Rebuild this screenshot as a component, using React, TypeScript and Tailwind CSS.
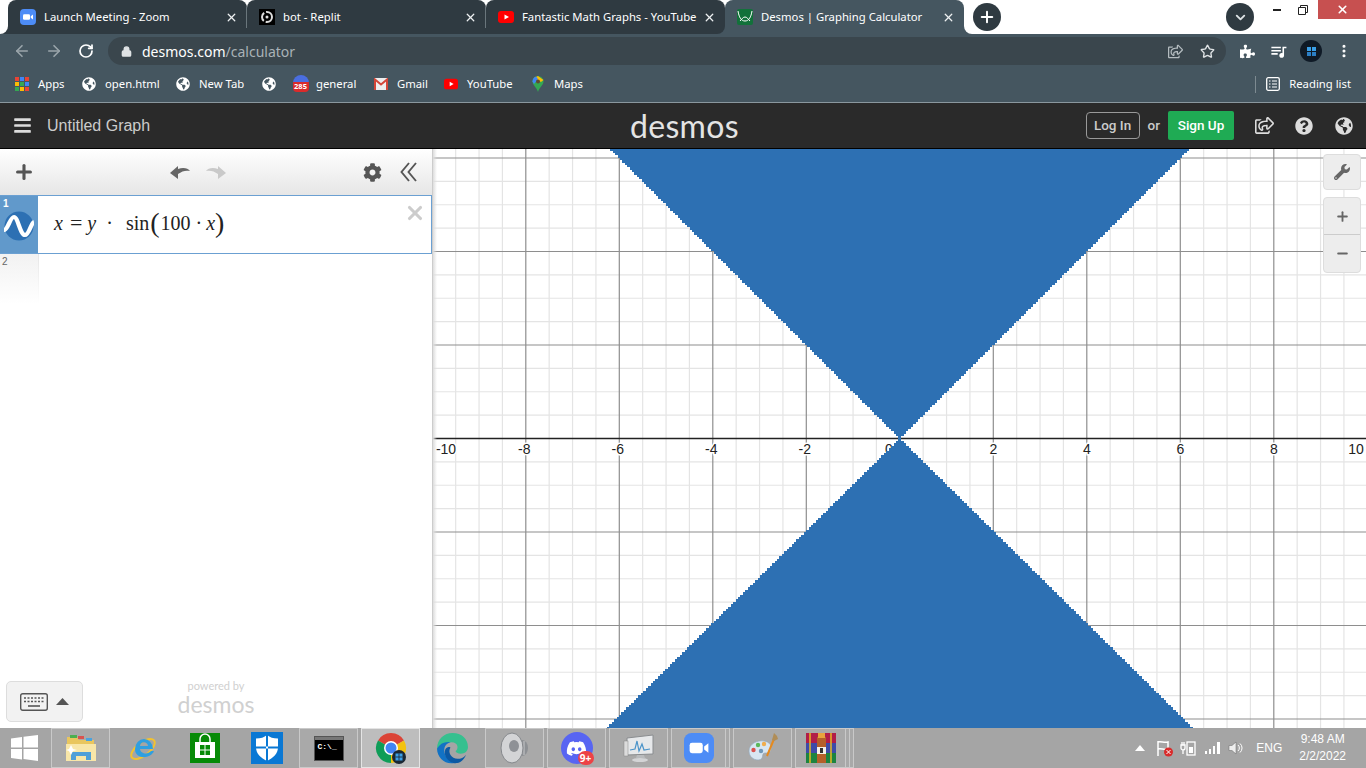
import type { ReactNode } from "react";
import { ArrowLeft, ArrowRight, ChevronDown, Lock, Minus, MoreVertical, Plus, RotateCw, Star, X } from "lucide-react";
import { FaBars, FaCog, FaDiscord, FaGlobeAmericas, FaPuzzlePiece, FaQuestionCircle, FaRegShareSquare, FaWrench } from "react-icons/fa";
import { MdQueueMusic } from "react-icons/md";

const UNIT = 46.75;
const CX = 466.8;
const CY = 289.5;
const W = 933;
const H = 579;

const range = (from: number, to: number) => Array.from({ length: to - from + 1 }, (_, i) => from + i);

// the plotted region has a jagged edge, so build it out of little steps
function stairs(dir: number) {
  const step = 2.4;
  const k = dir > 0 ? 1.012 : 1; // lower half opens a touch wider
  let left = `M${CX} ${CY}`;
  let right = "";
  for (let i = 1; i <= 125; i++) {
    const d = i * step;
    const x = d * k - 1;
    left += `L${CX - x} ${CY + dir * (d - step)}L${CX - x} ${CY + dir * d}`;
    right = `L${CX + x} ${CY + dir * d}L${CX + x} ${CY + dir * (d - step)}` + right;
  }
  return left + right + "Z";
}

function Graph() {
  const xs = range(-21, 21).map((i) => ({ p: CX + (i * UNIT) / 2, major: i % 4 === 0 }));
  const ys = range(-13, 13).map((i) => ({ p: CY + (i * UNIT) / 2, major: i % 4 === 0 }));
  const labels = [-10, -8, -6, -4, -2, 2, 4, 6, 8, 10];
  return (
    <svg width={W} height={H} viewBox={`0 0 ${W} ${H}`} className="block">
      {xs.filter((l) => !l.major).map((l) => <line key={l.p} x1={l.p} x2={l.p} y1={0} y2={H} stroke="#e4e4e4" strokeWidth={1.2} />)}
      {ys.filter((l) => !l.major).map((l) => <line key={l.p} x1={0} x2={W} y1={l.p} y2={l.p} stroke="#e4e4e4" strokeWidth={1.2} />)}
      {xs.filter((l) => l.major).map((l) => <line key={l.p} x1={l.p} x2={l.p} y1={0} y2={H} stroke="#8e8e8e" strokeWidth={1.2} />)}
      {ys.filter((l) => l.major && l.p !== CY).map((l) => <line key={l.p} x1={0} x2={W} y1={l.p} y2={l.p} stroke="#8e8e8e" strokeWidth={1.2} />)}
      <line x1={0} x2={W} y1={CY} y2={CY} stroke="#222" strokeWidth={1.6} />
      <text x={CX - 11} y={305} textAnchor="middle" fontFamily="'Liberation Sans',sans-serif" fontSize={14} fill="#222">0</text>
      <path d={stairs(-1)} fill="#2d70b3" shapeRendering="crispEdges" />
      <path d={stairs(1)} fill="#2d70b3" shapeRendering="crispEdges" />
      {labels.map((n) => (
        <text
          key={n}
          x={n === -10 ? 13 : n === 10 ? 923 : CX + n * UNIT - (n < 0 ? 1.5 : 0)}
          y={305}
          textAnchor="middle"
          fontFamily="'Liberation Sans',sans-serif"
          fontSize={14}
          fill="#222"
          stroke="#fff"
          strokeWidth={3}
          paintOrder="stroke"
        >
          {n}
        </text>
      ))}
    </svg>
  );
}

function ZoomIcon({ size = 16 }: { size?: number }) {
  return (
    <svg width={size} height={size} viewBox="0 0 32 32">
      <rect width="32" height="32" rx="8" fill="#4d8cf6" />
      <rect x="6" y="10.5" width="14" height="11" rx="2.5" fill="#fff" />
      <path d="M21.5 14.5 26 11v10l-4.500-3.500z" fill="#fff" />
    </svg>
  );
}

function YoutubeIcon() {
  return (
    <svg width="16" height="12" viewBox="0 0 16 12">
      <rect width="16" height="12" rx="3" fill="#f00" />
      <path d="M6.500 3.500 11 6 6.500 8.500z" fill="#fff" />
    </svg>
  );
}

function Tab({ icon, title, active, last, sep }: { icon: ReactNode; title: string; active?: boolean; last?: boolean; sep?: boolean }) {
  return (
    <div className={`flex h-[34px] w-[239px] shrink-0 items-center rounded-t-lg pl-3 ${active ? "bg-[#455660]" : "bg-[#2f3a41]"} ${last ? "rounded-br-lg" : ""}`}>
      <div className="flex w-4 shrink-0 items-center justify-center">{icon}</div>
      <span className="ml-2 w-[181px] truncate text-[11.3px] text-white">{title}</span>
      <X size={13} strokeWidth={2.4} className="shrink-0 text-[#eef1f2]" />
      {sep && <div className="ml-auto h-[21px] w-px bg-[#6a767c]" />}
    </div>
  );
}

function Bookmark({ w, icon, label }: { w: string; icon: ReactNode; label?: string }) {
  return (
    <div className={`flex shrink-0 items-center ${w}`}>
      <div className="flex h-4 w-[14px] shrink-0 items-center justify-center">{icon}</div>
      {label && <span className="ml-[9px] text-[11.3px] text-white">{label}</span>}
    </div>
  );
}

const globe = <FaGlobeAmericas size={14} className="text-white" />;

function AppsIcon() {
  const colors = ["#ea4335", "#4285f4", "#ea4335", "#fbbc05", "#34a853", "#4285f4", "#34a853", "#fbbc05", "#ea4335"];
  return (
    <div className="grid grid-cols-3 gap-[1px]">
      {colors.map((c, i) => <svg key={i} width="4" height="4" className="block"><rect width="4" height="4" fill={c} /></svg>)}
    </div>
  );
}

function ChromeIcon() {
  return (
    <svg width="32" height="32" viewBox="0 0 32 32">
      <path d="M16 16 3 8.500A15 15 0 0 1 29 8.500z" fill="#db4437" />
      <path d="M16 16 29 8.500A15 15 0 0 1 16 31z" fill="#f4c20d" />
      <path d="M16 16 16 31A15 15 0 0 1 3 8.500z" fill="#0f9d58" />
      <circle cx="16" cy="16" r="7" fill="#fff" />
      <circle cx="16" cy="16" r="5.500" fill="#4285f4" />
      <circle cx="24" cy="25" r="7" fill="#1a2733" />
      <rect x="20.500" y="21.500" width="7" height="7" fill="#3aa0e8" />
      <path d="M24 21.500v7M20.500 25h7" stroke="#1a2733" strokeWidth=".8" />
    </svg>
  );
}

function TaskIcon({ name }: { name: string }) {
  switch (name) {
    case "folder":
      return (
        <svg width="32" height="30" viewBox="0 0 32 30">
          <path d="M2 4h10l2 3h15v20H2z" fill="#e9c65e" />
          <rect x="5" y="2" width="7" height="3" fill="#4caf50" />
          <rect x="13" y="3" width="6" height="3" fill="#d9534f" />
          <rect x="21" y="5" width="6" height="3" fill="#4aa3df" />
          <path d="M1 11h30v17H1z" fill="#f8e6a8" />
          <path d="M6 19h20v8h-5v-4H11v4H6z" fill="#4f9fd8" />
          <path d="M6 12l2 4 4 1-4 1-2 4-2-4-3-1 3-1z" fill="#fff" />
        </svg>
      );
    case "ie":
      return (
        <svg width="32" height="32" viewBox="0 0 32 32">
          <ellipse cx="16" cy="17" rx="14" ry="6.500" transform="rotate(-38 16 17)" fill="none" stroke="#f2c230" strokeWidth="2" />
          <path d="M8 17a9 10 0 1 1 18 0H13c.5 5 8 6 11 2h3c-3 8-19 9-19-2zm5-3h8c-.5-5-7.500-5-8 0z" fill="#2f9fe0" fillRule="evenodd" />
        </svg>
      );
    case "store":
      return (
        <svg width="30" height="30" viewBox="0 0 30 30">
          <rect width="30" height="30" fill="#078a07" />
          <path d="M5 9h20v16H5z" fill="#fff" />
          <path d="M10 9V6a5 5 0 0 1 10 0v3" fill="none" stroke="#fff" strokeWidth="1.500" />
          <path d="M10 12h4.500v4.500H10zm5.500 0H20v4.500h-4.500zM10 17.500h4.500V22H10zm5.500 0H20V22h-4.500z" fill="#078a07" />
        </svg>
      );
    case "shield":
      return (
        <svg width="32" height="32" viewBox="0 0 32 32">
          <rect width="32" height="32" fill="#0a78d4" />
          <path d="M16 3c3 2.500 6 3.500 11 3.500V15c0 7-5 11-11 14C10 26 5 22 5 15V6.500C10 6.500 13 5.500 16 3z" fill="#fff" />
          <path d="M15 3v26h2V3zM5 14.500h22v2H5z" fill="#0a78d4" />
        </svg>
      );
    case "cmd":
      return (
        <div className="flex h-[25px] w-[30px] flex-col border border-[#555] bg-black">
          <div className="h-[3px] bg-[#777]" />
          <span className="pl-[3px] pt-[3px] font-['Liberation_Mono',monospace] text-[8px] leading-[8px] font-bold text-white">C:\_</span>
        </div>
      );
    case "chrome":
      return <ChromeIcon />;
    case "edge":
      return (
        <svg width="33" height="33" viewBox="0 0 32 32">
          <path d="M1 16C1 7 8 1 16 1c9 0 15 6 15 13.500 0 4-3 6.500-7 6.500-3 0-5-1-5-2.500C22 17 22 10 15 10 9 10 5 13 1 16z" fill="#36c08f" />
          <path d="M1 16c3-5 8-7 13-6-4 1-6 4-6 8 0 5 4 10 10 12-9 2-17-5-17-14z" fill="#1272c4" />
          <path d="M14 15c-3 5 1 11 7 11 3 0 6-1 8-4-2 6-7 9-12 8-6-1-10-8-8-13 1-2 3-3 5-2z" fill="#0c59a4" />
        </svg>
      );
    case "speaker":
      return (
        <svg width="30" height="32" viewBox="0 0 30 32">
          <ellipse cx="22" cy="16" rx="6" ry="8" fill="#8d9094" />
          <path d="M21 8v16M24 9v14" stroke="#c8c9cb" />
          <ellipse cx="12" cy="16" rx="11" ry="15" fill="#d3d4d6" stroke="#85888c" />
          <ellipse cx="14" cy="14" rx="5" ry="6" fill="#8e9196" />
        </svg>
      );
    case "discord":
      return (
        <div className="relative flex size-8 items-center justify-center rounded-full bg-[#5865f2]">
          <FaDiscord size={21} className="text-white" />
          <span className="absolute -right-[1px] -bottom-[1px] flex h-[14px] w-[16px] items-center justify-center rounded-full bg-[#ed4245] text-[10px] leading-none font-bold text-white">9+</span>
        </div>
      );
    case "monitor":
      return (
        <svg width="32" height="30" viewBox="0 0 32 30">
          <path d="M4 5l26-3v19L4 22z" fill="#e6e8ea" stroke="#8a8d90" />
          <path d="M7 17l5-1 2-8 2 10 3-7 2 6 6-1" fill="none" stroke="#4a93c9" strokeWidth="1.200" />
          <path d="M14 22h7l1 3H13z" fill="#b9bbbd" />
          <ellipse cx="17" cy="27" rx="8" ry="2" fill="#d3d4d6" />
          <rect x="1" y="8" width="4" height="15" fill="#dcdcdc" stroke="#888" strokeWidth=".5" />
        </svg>
      );
    case "zoom":
      return <ZoomIcon size={30} />;
    case "paint":
      return (
        <svg width="32" height="32" viewBox="0 0 32 32">
          <path d="M2 19c0-7 8-11 15-10 6 1 8 5 7 9-1 3-4 3-6 3-3 0-2 3-3 5-2 4-13 2-13-7z" fill="#d8e6f2" stroke="#8fa8bd" strokeWidth=".6" />
          <circle cx="6.500" cy="18" r="2.200" fill="#d9534f" />
          <circle cx="11" cy="13" r="2.200" fill="#5cb85c" />
          <circle cx="17" cy="12" r="2.200" fill="#f0ad4e" />
          <circle cx="14" cy="19" r="2.200" fill="#6f97b8" />
          <path d="M20 24 27 7" stroke="#e58a1f" strokeWidth="2" />
          <path d="M25 8l2-7 3 3 1 3-4 2z" fill="#b08d57" />
        </svg>
      );
    default:
      return (
        <svg width="32" height="30" viewBox="0 0 32 30">
          <rect x="1" y="0" width="30" height="10" fill="#b21e48" />
          <rect x="1" y="10" width="30" height="10" fill="#3e4ba8" />
          <rect x="1" y="20" width="30" height="10" fill="#1c8440" />
          <path d="M5 0v30M26 0v30" stroke="#e8b923" strokeWidth="1.500" />
          <rect x="12" y="4" width="9" height="26" fill="#b5602a" />
          <rect x="13" y="0" width="7" height="5" fill="#e8a33d" />
          <rect x="12" y="14" width="9" height="7" fill="#f4f1e8" />
          <rect x="15" y="15" width="3" height="5" fill="#333" />
        </svg>
      );
  }
}

const taskItems = [
  { name: "folder", on: true },
  { name: "ie" },
  { name: "store" },
  { name: "shield" },
  { name: "cmd", on: true },
  { name: "chrome", on: true, strong: true },
  { name: "edge" },
  { name: "speaker", on: true },
  { name: "discord", on: true },
  { name: "monitor", on: true },
  { name: "zoom", on: true, stacked: 1 },
  { name: "paint", on: true },
  { name: "winrar", on: true, stacked: 2 },
];

function TaskButton({ name, on, strong, stacked = 0 }: { name: string; on?: boolean; strong?: boolean; stacked?: number }) {
  return (
    <div className={`flex h-10 w-[59px] shrink-0 ${on ? `border ${strong ? "border-[#e4e4e4] bg-[#bdbdbd]" : "border-[#c9c9c9] bg-[#a9a9a9]"}` : ""}`}>
      <div className="flex flex-1 items-center justify-center">
        <TaskIcon name={name} />
      </div>
      {stacked > 0 && <div className="w-[4px] border-l border-[#c9c9c9]" />}
      {stacked > 1 && <div className="w-[4px] border-l border-[#c9c9c9]" />}
    </div>
  );
}

export default function App() {
  return (
    <div className="flex h-screen w-[1366px] flex-col overflow-hidden bg-white font-['Noto_Sans',sans-serif]">
      {/* chrome tab strip */}
      <div className="flex h-[34px] shrink-0 bg-[linear-gradient(#fff_0_50%,#455660_50%)]">
        <div className="w-2 shrink-0 bg-[#2f3a41]">
          <div className="h-full rounded-br-lg bg-white" />
        </div>
        <Tab icon={<ZoomIcon />} title="Launch Meeting - Zoom" sep />
        <Tab
          icon={
            <svg width="16" height="16" viewBox="0 0 16 16">
              <rect width="16" height="16" fill="#000" />
              <circle cx="8" cy="8" r="5" fill="none" stroke="#ddd" strokeWidth="2" strokeDasharray="9 2" />
              <circle cx="8" cy="8" r="1.500" fill="#ddd" />
            </svg>
          }
          title="bot - Replit"
          sep
        />
        <Tab icon={<YoutubeIcon />} title="Fantastic Math Graphs - YouTube" last />
        <Tab
          icon={
            <svg width="16" height="16" viewBox="0 0 16 16">
              <rect width="16" height="16" rx="2" fill="#12713a" />
              <path d="M1 2c1 6 3 10 7 10s6-4 7-10M3 12c2-2 3-4 5-4s3 2 5 4" fill="none" stroke="#fff" strokeWidth="1" />
            </svg>
          }
          title="Desmos | Graphing Calculator"
          active
        />
        <div className="flex flex-1 items-center rounded-bl-lg bg-white">
          <div className="ml-[9px] flex size-7 items-center justify-center rounded-full bg-[#2f3a41]">
            <Plus size={18} strokeWidth={2.6} className="text-white" />
          </div>
          <div className="ml-[225px] flex size-7 items-center justify-center rounded-full bg-[#2f3a41]">
            <ChevronDown size={15} strokeWidth={3} className="text-[#dde2e5]" />
          </div>
          <div className="mb-[15px] ml-[10px] flex h-[19px] flex-1 items-start">
            <div className="flex h-[19px] w-[26px] items-center justify-center">
              <div className="h-[2px] w-[8px] bg-[#222]" />
            </div>
            <div className="flex h-[19px] w-[26px] items-center justify-center">
              <svg width="10" height="10" viewBox="0 0 10 10">
                <path d="M2.500 2.500V.5h7v7h-2M.5 2.500h7v7h-7z" fill="none" stroke="#222" />
              </svg>
            </div>
            <div className="ml-auto flex h-[19px] w-[48px] items-center justify-center bg-[#c75050]">
              <X size={13} strokeWidth={3} className="text-white" />
            </div>
          </div>
        </div>
      </div>

      {/* toolbar */}
      <div className="flex h-[34px] shrink-0 items-center bg-[#455660] pl-[13px]">
        <ArrowLeft size={18} strokeWidth={2.2} className="text-[#9aa5ab]" />
        <ArrowRight size={18} strokeWidth={2.2} className="ml-[14px] text-[#9aa5ab]" />
        <RotateCw size={16} strokeWidth={2.6} className="ml-[15px] text-white" />
        <div className="ml-[14px] flex h-[28px] w-[1118px] items-center rounded-full bg-[#3a464d] pl-[13px]">
          <Lock size={11} strokeWidth={3} className="text-[#dfe3e5]" fill="currentColor" />
          <span className="ml-[10px] text-[14px] text-white">
            desmos.com<span className="text-[#a9b2b7]">/calculator</span>
          </span>
          <FaRegShareSquare size={15} className="ml-auto text-[#b4bcc0]" />
          <Star size={15} strokeWidth={2.2} className="mr-[11px] ml-[17px] text-[#dfe3e5]" />
        </div>
        <FaPuzzlePiece size={15} className="ml-[14px] text-white" />
        <MdQueueMusic size={19} className="ml-[14px] text-white" />
        <div className="ml-[12px] flex size-[22px] items-center justify-center rounded-full bg-[#0f1a26]">
          <div className="grid grid-cols-2 gap-[1px]">
            <div className="size-[4px] bg-[#3aa0e8]" />
            <div className="size-[4px] bg-[#3aa0e8]" />
            <div className="size-[4px] bg-[#2b7fc6]" />
            <div className="size-[4px] bg-[#2b7fc6]" />
          </div>
        </div>
        <MoreVertical size={16} strokeWidth={2.6} className="ml-[14px] text-white" />
      </div>

      {/* bookmarks */}
      <div className="flex h-[35px] shrink-0 items-center border-b border-[#8a979e] bg-[#455660] pb-[2px] pl-[15px]">
        <Bookmark w="w-[67px]" icon={<AppsIcon />} label="Apps" />
        <Bookmark w="w-[94px]" icon={globe} label="open.html" />
        <Bookmark w="w-[86px]" icon={globe} label="New Tab" />
        <Bookmark w="w-[31px]" icon={globe} />
        <Bookmark
          w="w-[81px]"
          icon={
            <div className="ml-[1px] flex h-[18px] w-4 shrink-0 flex-col overflow-hidden rounded-t-full">
              <div className="h-[7px] bg-[#4a6ee0]" />
              <div className="flex h-[10px] items-center justify-center rounded-b-sm bg-[#d92b2b] text-[7.5px] leading-none font-bold text-white">285</div>
            </div>
          }
          label="general"
        />
        <Bookmark
          w="w-[70px]"
          icon={
            <svg width="14" height="12" viewBox="0 0 14 12">
              <rect width="14" height="12" fill="#eee" />
              <path d="M1 12V1.500L7 6.500l6-5V12" fill="none" stroke="#d44638" strokeWidth="2" />
            </svg>
          }
          label="Gmail"
        />
        <Bookmark w="w-[87px]" icon={<YoutubeIcon />} label="YouTube" />
        <Bookmark
          w="w-[60px]"
          icon={
            <svg width="14" height="16" viewBox="0 0 14 16">
              <path d="M7 0a5.500 5.500 0 0 1 5.500 5.500C12.500 9 8.500 11 7 16 5.500 11 1.500 9 1.500 5.500A5.500 5.500 0 0 1 7 0z" fill="#34a853" />
              <path d="M3 2 7 0l5.500 4L10 6z" fill="#fbbc05" />
              <path d="M1.500 5.500C1.500 3 3 1 5 .5L7 3 3 8z" fill="#4285f4" />
              <circle cx="7" cy="5.500" r="2" fill="#5f4b32" />
            </svg>
          }
          label="Maps"
        />
        <div className="ml-auto h-[17px] w-px bg-[#7d8a91]" />
        <svg width="14" height="14" viewBox="0 0 14 14" className="ml-[10px]">
          <rect x=".7" y=".7" width="12.600" height="12.600" rx="1.500" fill="none" stroke="#fff" strokeWidth="1.300" />
          <path d="M3 4h1.500M6 4h5M3 7h1.500M6 7h5M3 10h1.500M6 10h5" stroke="#fff" />
        </svg>
        <span className="mr-[15px] ml-[9px] text-[11.3px] text-white">Reading list</span>
      </div>

      {/* desmos header */}
      <div className="flex h-[46px] shrink-0 items-center border-b border-black bg-[#2a2a2a] pr-[13px] pl-[13px] font-['Liberation_Sans',sans-serif]">
        <FaBars size={19} className="text-[#ddd]" />
        <span className="ml-[15px] w-[400px] text-[16px] text-[#ccc]">Untitled Graph</span>
        <span className="ml-[183px] font-['Lato',sans-serif] text-[32px] leading-none tracking-[0.3px] text-[#e4e4e4]">desmos</span>
        <div className="ml-auto flex h-[27px] w-[54px] items-center justify-center rounded-[4px] border border-[#999] font-['Roboto',sans-serif] text-[13.5px] font-medium text-[#ccc]">Log In</div>
        <span className="ml-[8px] font-['Roboto',sans-serif] text-[13.5px] font-medium text-[#ccc]">or</span>
        <div className="ml-[8px] flex h-[29px] w-[66px] items-center justify-center rounded-[2px] bg-[#1fab54] font-['Roboto',sans-serif] text-[13.5px] font-medium text-white">Sign Up</div>
        <FaRegShareSquare size={19} className="ml-[21px] text-[#ddd]" />
        <FaQuestionCircle size={18} className="ml-[21px] text-[#ddd]" />
        <FaGlobeAmericas size={18} className="ml-[22px] text-[#ddd]" />
      </div>

      <div className="flex min-h-0 flex-1">
        {/* expression list */}
        <div className="flex w-[433px] shrink-0 flex-col border-r border-[#ccc] bg-white font-['Liberation_Serif',serif]">
          <div className="flex h-[46px] shrink-0 items-center bg-[linear-gradient(#fff,#e6e6e6)] pr-[15px] pl-[13px]">
            <Plus size={22} strokeWidth={3.4} className="text-[#555]" />
            <svg width="20" height="13" viewBox="0 0 20 13" className="ml-[135px]">
              <path d="M0 7 8 0v3C13 1 18 2 20 5 16 4 12 5 8 8v5z" fill="#666" />
            </svg>
            <svg width="20" height="13" viewBox="0 0 20 13" className="ml-[16px]">
              <path d="M20 7 12 0v3C7 1 2 2 0 5c4-1 8 0 12 3v5z" fill="#c9c9c9" />
            </svg>
            <FaCog size={19} className="ml-auto text-[#555]" />
            <svg width="17" height="20" viewBox="0 0 17 20" className="ml-[18px]">
              <path d="M9 1 1.500 10 9 19M16 1 8.500 10 16 19" fill="none" stroke="#555" strokeWidth="1.900" />
            </svg>
          </div>
          <div className="flex h-[59px] shrink-0 border border-l-0 border-[#6ba0d2]">
            <div className="relative flex w-[38px] shrink-0 items-center justify-center bg-[#6199cb]">
              <span className="absolute top-[2px] left-[3px] font-['Liberation_Sans',sans-serif] text-[10px] leading-[12px] font-bold text-white">1</span>
              <svg width="30" height="30" viewBox="0 0 30 30" className="mt-[2px]">
                <circle cx="15" cy="15" r="14.500" fill="#2d70b3" />
                <path d="M0 19C4 19 6 6 10 6C14 6 16 24 21 24C25 24 27 12 30 11" fill="none" stroke="#fff" strokeWidth="4.200" />
              </svg>
            </div>
            <div className="flex flex-1 items-center pb-[3px] pl-[16px] text-[20px] text-[#222]">
              <i>x</i>
              <span className="ml-[7px] text-[22px] leading-none">=</span>
              <i className="ml-[5px]">y</i>
              <span className="ml-[10px]">·</span>
              <span className="ml-[13px]">sin</span>
              <span className="ml-[1px] text-[28px] leading-none font-light">(</span>
              <span className="ml-[1px]">100</span>
              <span className="ml-[5px]">·</span>
              <i className="ml-[4px]">x</i>
              <span className="text-[28px] leading-none font-light">)</span>
              <X size={22} strokeWidth={3.4} className="mb-[21px] ml-auto mr-[5px] text-[#ccc]" />
            </div>
          </div>
          <div className="flex h-[50px] shrink-0">
            <div className="w-[38px] shrink-0 bg-[linear-gradient(#f2f2f2,#fff)] pt-[2px] pl-[2px] font-['Liberation_Sans',sans-serif] text-[10px] leading-[12px] text-[#666]">2</div>
            <div className="w-px bg-[linear-gradient(#e6e6e6,#fff)]" />
          </div>
          <div className="mt-auto grid grid-cols-[1fr_auto_1fr] items-end pr-[6px] pb-[6px] pl-[6px]">
            <div className="flex h-[41px] w-[77px] items-center justify-center gap-[8px] rounded-[5px] border border-[#ddd] bg-[#f2f2f2]">
              <svg width="28" height="18" viewBox="0 0 28 18">
                <rect x=".7" y=".7" width="26.600" height="16.600" rx="2" fill="none" stroke="#555" strokeWidth="1.400" />
                <path d="M4 5h20M4 8.500h20" stroke="#555" strokeWidth="1.600" strokeDasharray="2 1.500" />
                <path d="M8 13h12" stroke="#555" strokeWidth="1.600" />
              </svg>
              <svg width="13" height="7" viewBox="0 0 13 7"><path d="M6.500 0 13 7H0z" fill="#555" /></svg>
            </div>
            <div className="mb-[6px] flex flex-col items-center font-['Lato',sans-serif] text-[#d0d0d0]">
              <span className="text-[11px] leading-[12px]">powered by</span>
              <span className="text-[23px] leading-[24px]">desmos</span>
            </div>
          </div>
        </div>

        {/* graph */}
        <div className="relative min-w-0 flex-1 overflow-hidden bg-white">
          <Graph />
          <div className="absolute inset-y-0 left-0 w-[4px] bg-[linear-gradient(to_right,#ddd,#fff0)]" />
          <div className="absolute top-[5px] right-[5px] flex w-[38px] flex-col gap-[7px]">
            <div className="flex h-[36px] items-center justify-center rounded-[4px] border border-[#ddd] bg-[#ededed]">
              <FaWrench size={16} className="text-[#666]" />
            </div>
            <div className="flex flex-col rounded-[4px] border border-[#ddd] bg-[#ededed]">
              <div className="flex h-[37px] items-center justify-center border-b border-[#ccc]">
                <Plus size={15} strokeWidth={3} className="text-[#666]" />
              </div>
              <div className="flex h-[37px] items-center justify-center">
                <Minus size={15} strokeWidth={3} className="text-[#666]" />
              </div>
            </div>
          </div>
        </div>
      </div>

      {/* windows taskbar */}
      <div className="flex h-10 shrink-0 items-center gap-[3px] bg-[#a5a5a5] text-white">
        <div className="flex h-10 w-[48px] shrink-0 items-center justify-center">
          <svg width="27" height="26" viewBox="0 0 27 26">
            <path d="M0 3.500 11 2v10.500H0zM12.500 1.800 27 0v12.500H12.500zM0 14h11v10.500L0 23zM12.500 14H27v12l-14.500-2z" fill="#fff" />
          </svg>
        </div>
        {taskItems.map((t) => <TaskButton key={t.name} name={t.name} on={t.on} strong={t.strong} stacked={t.stacked} />)}
        <div className="ml-auto flex items-center pr-[20px]">
          <svg width="10" height="6" viewBox="0 0 10 6" className="mr-[11px]"><path d="M5 0l5 6H0z" fill="#fff" /></svg>
          <svg width="18" height="17" viewBox="0 0 18 17" className="mr-[6px]">
            <path d="M2 1v15M2 2c3-1 6 1 10 0v7c-4 1-7-1-10 0" fill="none" stroke="#fff" strokeWidth="1.500" />
            <circle cx="12.500" cy="12" r="4.500" fill="#d92b2b" />
            <path d="M10.500 10l4 4M14.500 10l-4 4" stroke="#fff" />
          </svg>
          <svg width="16" height="16" viewBox="0 0 16 16" className="mr-[9px]">
            <path d="M1 5h4v3a2 2 0 0 1-4 0zM2 2v3M4 2v3M3 10v4" fill="none" stroke="#fff" strokeWidth="1.300" />
            <rect x="7" y="2" width="8" height="13" fill="none" stroke="#fff" strokeWidth="1.300" />
            <rect x="9" y="7" width="4" height="6" fill="#fff" />
          </svg>
          <svg width="16" height="12" viewBox="0 0 16 12" className="mr-[7px]">
            <path d="M0 9h2v3H0zM4 7h2v5H4zM8 4h2v8H8zM12 0h3v12h-3z" fill="#fff" />
          </svg>
          <svg width="16" height="14" viewBox="0 0 16 14">
            <path d="M1 4.500h3L8 1v12L4 9.500H1z" fill="#eee" stroke="#666" strokeWidth=".5" />
            <path d="M10 4a4 4 0 0 1 0 6M12 2.500a6 6 0 0 1 0 9" fill="none" stroke="#fff" />
          </svg>
          <span className="ml-[12px] w-[24px] font-['Liberation_Sans',sans-serif] text-[12px]">ENG</span>
          <div className="ml-[19px] flex flex-col items-center font-['Liberation_Sans',sans-serif] text-[12px] leading-[17px]">
            <span>9:48 AM</span>
            <span>2/2/2022</span>
          </div>
        </div>
      </div>
    </div>
  );
}
